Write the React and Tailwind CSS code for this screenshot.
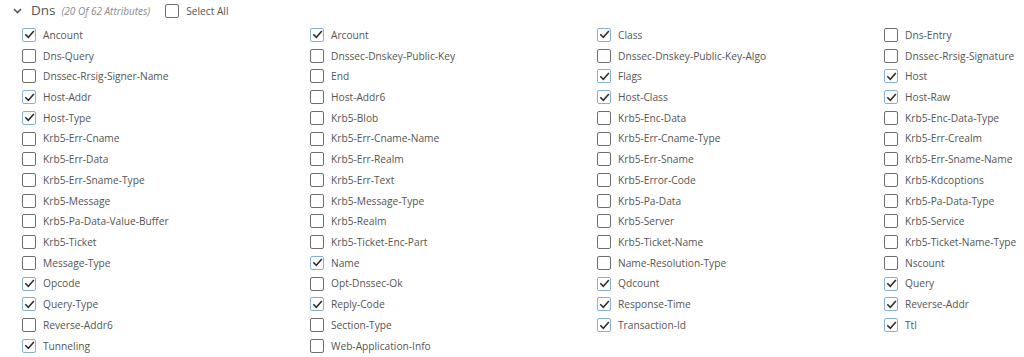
import React from 'react';

const ROWS = [
  [['Ancount', 1], ['Arcount', 1], ['Class', 1], ['Dns-Entry', 0]],
  [['Dns-Query', 0], ['Dnssec-Dnskey-Public-Key', 0], ['Dnssec-Dnskey-Public-Key-Algo', 0], ['Dnssec-Rrsig-Signature', 0]],
  [['Dnssec-Rrsig-Signer-Name', 0], ['End', 0], ['Flags', 1], ['Host', 1]],
  [['Host-Addr', 1], ['Host-Addr6', 0], ['Host-Class', 1], ['Host-Raw', 1]],
  [['Host-Type', 1], ['Krb5-Blob', 0], ['Krb5-Enc-Data', 0], ['Krb5-Enc-Data-Type', 0]],
  [['Krb5-Err-Cname', 0], ['Krb5-Err-Cname-Name', 0], ['Krb5-Err-Cname-Type', 0], ['Krb5-Err-Crealm', 0]],
  [['Krb5-Err-Data', 0], ['Krb5-Err-Realm', 0], ['Krb5-Err-Sname', 0], ['Krb5-Err-Sname-Name', 0]],
  [['Krb5-Err-Sname-Type', 0], ['Krb5-Err-Text', 0], ['Krb5-Error-Code', 0], ['Krb5-Kdcoptions', 0]],
  [['Krb5-Message', 0], ['Krb5-Message-Type', 0], ['Krb5-Pa-Data', 0], ['Krb5-Pa-Data-Type', 0]],
  [['Krb5-Pa-Data-Value-Buffer', 0], ['Krb5-Realm', 0], ['Krb5-Server', 0], ['Krb5-Service', 0]],
  [['Krb5-Ticket', 0], ['Krb5-Ticket-Enc-Part', 0], ['Krb5-Ticket-Name', 0], ['Krb5-Ticket-Name-Type', 0]],
  [['Message-Type', 0], ['Name', 1], ['Name-Resolution-Type', 0], ['Nscount', 0]],
  [['Opcode', 1], ['Opt-Dnssec-Ok', 0], ['Qdcount', 1], ['Query', 1]],
  [['Query-Type', 1], ['Reply-Code', 1], ['Response-Time', 1], ['Reverse-Addr', 1]],
  [['Reverse-Addr6', 0], ['Section-Type', 0], ['Transaction-Id', 1], ['Ttl', 1]],
  [['Tunneling', 1], ['Web-Application-Info', 0]],
];

function Box({ checked }) {
  return (
    <span
      className={`w-[14px] h-[14px] flex-shrink-0 rounded-[2px] border-[1.5px] bg-white flex items-center justify-center ${
        checked ? 'border-[#86aee0]' : 'border-[#6f6f6f]'
      }`}
    >
      {checked && (
        <svg width="11" height="11" viewBox="0 0 12 12" fill="none">
          <path d="M2 6.3 L4.7 9 L10.2 2.8" stroke="#2f2f2f" strokeWidth="1.7" strokeLinecap="square" />
        </svg>
      )}
    </span>
  );
}

export default function App() {
  const items = ROWS.flat();
  return (
    <div className="w-[1024px] h-[357px] overflow-hidden bg-white text-[#555] font-['Open_Sans','Liberation_Sans',sans-serif]">
      {/* header */}
      <div className="flex items-center h-[22px] pl-[13px]">
        <svg width="9" height="6" viewBox="0 0 9 6" className="mr-[9px]">
          <path d="M1 1 L4.5 4.5 L8 1" stroke="#555" strokeWidth="1.6" fill="none" />
        </svg>
        <span className="text-[13.5px] leading-none">Dns</span>
        <span className="ml-[6px] text-[10px] italic text-[#8a8a8a] leading-none">(20 Of 62 Attributes)</span>
        <span className="ml-[15px] flex items-center gap-[7px]">
          <Box checked={false} />
          <span className="text-[10.2px] leading-none">Select All</span>
        </span>
      </div>

      {/* attribute grid */}
      <div className="grid grid-cols-[288px_287px_287px_1fr] pl-[22px] mt-[2.6px]">
        {items.map(([label, checked]) => (
          <label key={label} className="flex items-center gap-[7px] h-[20.73px]">
            <Box checked={!!checked} />
            <span className="text-[10.2px] leading-none whitespace-nowrap">{label}</span>
          </label>
        ))}
      </div>
    </div>
  );
}
